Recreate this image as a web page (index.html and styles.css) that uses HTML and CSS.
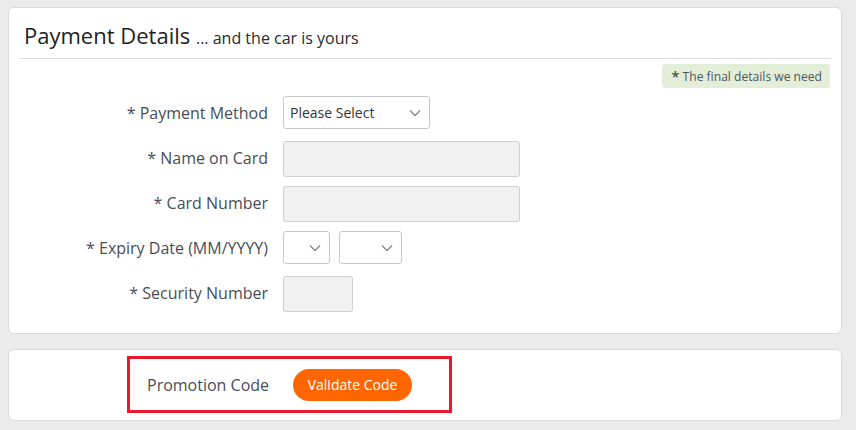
FILE: index.html
```html
<!DOCTYPE html>
<html>
<head>
<meta charset="utf-8">
<link rel="stylesheet" href="styles.css">
</head>
<body>
<div class="card card-main">
  <div class="card-header">
    <h2 class="title">Payment Details <span class="subtitle">... and the car is yours</span></h2>
  </div>
  <div class="note-row">
    <div class="note"><span class="star">*</span> The final details we need</div>
  </div>
  <div class="form">
    <div class="row">
      <label class="label">* Payment Method</label>
      <div class="select sel-method"><span>Please Select</span><svg class="chev" viewBox="0 0 12 8" width="12" height="8"><path d="M1 1.5 L6 6.5 L11 1.5" fill="none" stroke="#8a8a8a" stroke-width="1.4"/></svg></div>
    </div>
    <div class="row">
      <label class="label">* Name on Card</label>
      <div class="input inp-long"></div>
    </div>
    <div class="row">
      <label class="label">* Card Number</label>
      <div class="input inp-long"></div>
    </div>
    <div class="row">
      <label class="label">* Expiry Date (MM/YYYY)</label>
      <div class="pair">
        <div class="select sel-mm"><span></span><svg class="chev" viewBox="0 0 12 8" width="12" height="8"><path d="M1 1.5 L6 6.5 L11 1.5" fill="none" stroke="#8a8a8a" stroke-width="1.4"/></svg></div>
        <div class="select sel-yy"><span></span><svg class="chev" viewBox="0 0 12 8" width="12" height="8"><path d="M1 1.5 L6 6.5 L11 1.5" fill="none" stroke="#8a8a8a" stroke-width="1.4"/></svg></div>
      </div>
    </div>
    <div class="row">
      <label class="label">* Security Number</label>
      <div class="input inp-short"></div>
    </div>
  </div>
</div>
<div class="card card-promo">
  <div class="promo-box">
    <span class="promo-label">Promotion Code</span>
    <button class="btn">Validate Code</button>
  </div>
</div>
</body>
</html>
```
FILE: styles.css
```css
html, body {
  margin: 0;
  padding: 0;
  background: #ebebeb;
}
body {
  padding: 7px 14px 0 8px;
  font-family: "Open Sans", "Noto Sans", sans-serif;
  color: #444;
}
.card {
  background: #fff;
  border: 1px solid #dadada;
  border-radius: 6px;
  box-sizing: border-box;
}
.card-main {
  height: 327px;
  padding: 0 10px;
}
.card-header {
  border-bottom: 1px solid #dcdcdc;
  height: 51px;
  box-sizing: border-box;
  padding: 12px 0 0 5px;
}
.title {
  margin: 0;
  font-weight: 400;
  font-size: 22px;
  line-height: 30px;
  color: #222;
}
.subtitle {
  font-size: 16px;
  color: #2a2a2a;
}
.note-row {
  display: flex;
  justify-content: flex-end;
  padding-top: 5px;
}
.note {
  background: #e3eed9;
  border-radius: 3px;
  height: 24px;
  line-height: 24px;
  padding: 0 8px 0 9px;
  font-size: 12.1px;
  color: #4d5560;
  margin-right: 1px;
}
.note .star {
  font-size: 15px;
  color: #333;
  vertical-align: -1px;
}
.form {
  margin-top: 8px;
  display: flex;
  flex-direction: column;
  gap: 9px;
}
.row {
  display: grid;
  grid-template-columns: 249px auto;
  column-gap: 15px;
  align-items: start;
  height: 36px;
}
.label {
  text-align: right;
  font-size: 16px;
  line-height: 34px;
  color: #474d57;
  white-space: nowrap;
}
.select {
  height: 33px;
  box-sizing: border-box;
  border: 1px solid #c8c8c8;
  border-radius: 3px;
  background: #fff;
  display: flex;
  align-items: center;
  justify-content: space-between;
  padding: 0 8px 0 6px;
  font-size: 14px;
  color: #333;
}
.sel-method { width: 147px; }
.sel-mm { width: 47px; }
.sel-yy { width: 63px; }
.pair {
  display: flex;
  gap: 9px;
}
.input {
  height: 36px;
  box-sizing: border-box;
  border: 1px solid #cfcfcf;
  border-radius: 3px;
  background: #f1f1f1;
}
.inp-long { width: 237px; }
.inp-short { width: 70px; }
.card-promo {
  margin-top: 15px;
  height: 72px;
  padding: 6px 0 0 118px;
}
.promo-box {
  width: 325px;
  height: 57px;
  box-sizing: border-box;
  border: 3px solid #e8192c;
  display: flex;
  align-items: center;
  padding-left: 17px;
  gap: 24px;
}
.promo-label {
  font-size: 16px;
  color: #474d57;
}
.btn {
  border: none;
  background: #ff6600;
  color: #fff;
  font-family: "Open Sans", "Noto Sans", sans-serif;
  font-size: 14px;
  height: 32px;
  width: 119px;
  border-radius: 16px;
  padding: 0;
}
```
